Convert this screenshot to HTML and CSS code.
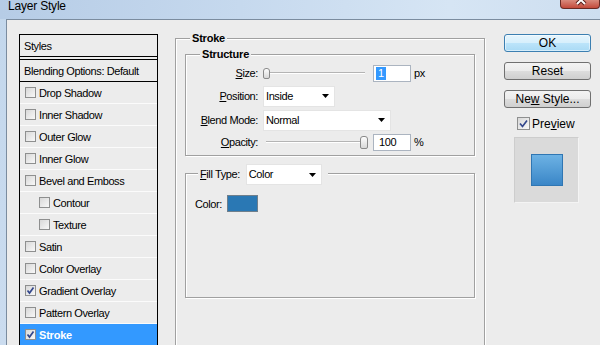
FILE: index.html
```html
<!DOCTYPE html>
<html>
<head>
	<meta charset="utf-8">
	<title>Layer Style</title>
	<link rel="stylesheet" href="styles.css">
</head>
<body>
	<div class="window">
		<div class="titlebar">
			<span class="title">Layer Style</span>
			<div class="close">
				<svg width="38" height="8" viewBox="0 0 38 8">
					<path d="M16 -4 L24 4 M24 -4 L16 4" stroke="#5a1f1a" stroke-width="4" fill="none"/>
					<path d="M16 -4 L24 4 M24 -4 L16 4" stroke="#fff" stroke-width="2" fill="none"/>
				</svg>
			</div>
		</div>

		<div class="dialog">
			<!-- bal oldali stílus lista -->
			<ul class="styles-list">
				<li class="list-head">Styles</li>
				<li class="list-blend">Blending Options: Default</li>
				<li><span class="cb"></span>Drop Shadow</li>
				<li><span class="cb"></span>Inner Shadow</li>
				<li><span class="cb"></span>Outer Glow</li>
				<li><span class="cb"></span>Inner Glow</li>
				<li><span class="cb"></span>Bevel and Emboss</li>
				<li class="sub"><span class="cb"></span>Contour</li>
				<li class="sub"><span class="cb"></span>Texture</li>
				<li><span class="cb"></span>Satin</li>
				<li><span class="cb"></span>Color Overlay</li>
				<li><span class="cb"><svg viewBox="0 0 9 9"><path d="M1.5 4.5 L3.5 7 L7.5 1.5"/></svg></span>Gradient Overlay</li>
				<li><span class="cb"></span>Pattern Overlay</li>
				<li class="selected"><span class="cb"><svg viewBox="0 0 9 9"><path d="M1.5 4.5 L3.5 7 L7.5 1.5"/></svg></span>Stroke</li>
			</ul>

			<!-- Stroke beállítások -->
			<fieldset class="group group-stroke">
				<legend>Stroke</legend>

				<fieldset class="group group-structure">
					<legend>Structure</legend>
					<div class="form-grid">
						<label><u>S</u>ize:</label>
						<div class="controls">
							<div class="slider"><span class="thumb"></span></div>
							<span class="field"><span class="sel">1</span></span>
							<span class="unit">px</span>
						</div>

						<label><u>P</u>osition:</label>
						<div class="controls">
							<div class="combo combo-position"><span>Inside</span><svg class="arrow" width="7" height="4" viewBox="0 0 7 4"><polygon points="0,0 7,0 3.5,4"/></svg></div>
						</div>

						<label><u>B</u>lend Mode:</label>
						<div class="controls">
							<div class="combo combo-blend"><span>Normal</span><svg class="arrow" width="7" height="4" viewBox="0 0 7 4"><polygon points="0,0 7,0 3.5,4"/></svg></div>
						</div>

						<label><u>O</u>pacity:</label>
						<div class="controls">
							<div class="slider slider-end"><span class="thumb thumb-tall"></span></div>
							<span class="field field-num">100</span>
							<span class="unit">%</span>
						</div>
					</div>
				</fieldset>

				<fieldset class="group group-fill">
					<legend>
						<div class="legend-row">
							<label><u>F</u>ill Type:</label>
							<div class="combo combo-fill"><span>Color</span><svg class="arrow" width="7" height="4" viewBox="0 0 7 4"><polygon points="0,0 7,0 3.5,4"/></svg></div>
						</div>
					</legend>
					<div class="color-row">
						<span>Color:</span>
						<span class="swatch"></span>
					</div>
				</fieldset>
			</fieldset>

			<!-- gombok és előnézet -->
			<div class="buttons">
				<div class="btn btn-default">OK</div>
				<div class="btn">Reset</div>
				<div class="btn">Ne<u>w</u> Style...</div>
				<div class="preview-check">
					<span class="cb cb-lg"><svg viewBox="0 0 11 11"><path d="M2 5.5 L4.5 8.5 L9 2.5"/></svg></span>
					<span>Pre<u>v</u>iew</span>
				</div>
				<div class="preview"><div class="preview-swatch"></div></div>
			</div>
		</div>
	</div>
</body>
</html>
```

FILE: styles.css
```css
body {
	margin: 0;
	font-family: "Liberation Sans", Arial, sans-serif;
	font-size: 11px;
	letter-spacing: -0.4px;
	color: #000;
}

.window {
	width: 600px;
	height: 345px;
	overflow: hidden;
	display: flex;
	flex-direction: column;
	background: linear-gradient(to bottom, #c3d7ec, #cbdcef);
}

.titlebar {
	height: 19px;
	flex-shrink: 0;
	display: flex;
	justify-content: space-between;
	align-items: flex-start;
	background: linear-gradient(to right, #b6cce6, #c6d9ee 40%, #d6e5f4 75%, #cddef0);
}

.title {
	margin: -1px 0 0 8px;
	font-size: 12px;
	line-height: 14px;
	letter-spacing: -0.2px;
}

.close {
	width: 38px;
	height: 8px;
	border: 1px solid #6a2b24;
	border-top: none;
	border-radius: 0 0 4px 4px;
	background: linear-gradient(#d98a7c, #c34a3b);
	overflow: hidden;
}

.close svg {
	display: block;
}

.dialog {
	flex: 1;
	min-height: 0;
	margin-left: 6px;
	border-top: 1px solid #7b8c9f;
	border-left: 1px solid #7b8c9f;
	background: #ececec;
	display: flex;
	align-items: flex-start;
	padding: 12px 0 0 12px;
	overflow: hidden;
}

/* lista */
.styles-list {
	list-style: none;
	margin: 2px 0 0;
	padding: 0;
	width: 139px;
	box-sizing: border-box;
	flex-shrink: 0;
	border: 1px solid #000;
	border-bottom: none;
}

.styles-list li {
	height: 21px;
	display: flex;
	align-items: center;
	gap: 3px;
	padding-left: 5px;
	border-bottom: 1px solid #fbfbfb;
	white-space: nowrap;
}

.styles-list .list-head {
	padding-left: 4px;
	border-bottom-color: #000;
	margin-bottom: 2px;
}

.styles-list .list-blend {
	padding-left: 4px;
	border-top: 1px solid #000;
	border-bottom-color: #000;
}

.styles-list .sub {
	padding-left: 19px;
}

.styles-list .selected {
	background: #3399ff;
	color: #fff;
	font-weight: bold;
	letter-spacing: -0.2px;
	border-bottom-color: #3399ff;
}

.cb {
	width: 11px;
	height: 11px;
	box-sizing: border-box;
	flex-shrink: 0;
	border: 1px solid #8e8f8f;
	background: linear-gradient(135deg, #d8d8d8, #f8f8f8);
	display: flex;
}

.cb svg {
	width: 100%;
	height: 100%;
}

.cb path {
	fill: none;
	stroke: #33478c;
	stroke-width: 1.7;
}

.cb-lg {
	width: 13px;
	height: 13px;
}

/* csoportok */
.group {
	margin: 0;
	border: 1px solid #a0a0a0;
	box-shadow: inset 1px 1px 0 #fff, 1px 1px 0 #fff;
	min-width: 0;
}

.group legend {
	padding: 0 2px;
	font-weight: bold;
	line-height: 13px;
	letter-spacing: -0.2px;
	background: #ececec;
}

.group-stroke {
	width: 310px;
	box-sizing: border-box;
	flex-shrink: 0;
	margin-left: 17px;
	padding: 3px 9px 0;
	height: 400px;
}

.group-stroke > legend {
	margin-left: 5px;
}

.group-structure {
	padding: 1px 0 3px;
}

.group-structure > legend {
	margin-left: 14px;
}

.form-grid {
	display: grid;
	grid-template-columns: 72px auto;
	grid-template-rows: 22px 24px 24px 20px;
	column-gap: 5px;
	align-items: center;
}

.form-grid label {
	text-align: right;
}

.controls {
	display: flex;
	align-items: center;
}

.slider {
	width: 105px;
	height: 14px;
	margin-right: 5px;
	display: flex;
	align-items: center;
	background:
		linear-gradient(#b4b4b4, #b4b4b4) no-repeat 3px 6px / 99px 1px,
		linear-gradient(#fff, #fff) no-repeat 3px 7px / 99px 1px;
}

.slider-end {
	justify-content: flex-end;
}

.thumb {
	width: 7px;
	height: 11px;
	box-sizing: border-box;
	border: 1px solid #8a8a8a;
	border-radius: 3px 3px 2px 2px;
	background: linear-gradient(#fdfdfd, #d8d8d8);
}

.thumb-tall {
	width: 8px;
	height: 13px;
}

.field {
	width: 38px;
	height: 17px;
	box-sizing: border-box;
	border: 1px solid #abb4c0;
	background: #fff;
	display: flex;
	align-items: center;
	padding-left: 2px;
	margin-right: 3px;
}

.field-num {
	padding-left: 5px;
}

.sel {
	background: #3399ff;
	color: #fff;
	padding: 0 2px;
	line-height: 13px;
}

.combo {
	height: 21px;
	box-sizing: border-box;
	border: 1px solid #e4e4e4;
	background: #fff;
	display: flex;
	align-items: center;
	justify-content: space-between;
	padding: 0 5px 0 2px;
}

.combo-position {
	width: 72px;
}

.combo-blend {
	width: 128px;
}

.combo-fill {
	width: 76px;
}

.arrow {
	display: block;
}

.group-fill {
	margin-top: 5px;
	padding: 0 0 85px;
}

.group-fill > legend {
	margin-left: 12px;
	padding: 3px 6px 0 2px;
	font-weight: normal;
	letter-spacing: -0.4px;
}

.legend-row {
	display: flex;
	align-items: center;
	gap: 6px;
}

.color-row {
	display: flex;
	align-items: center;
	gap: 5px;
	height: 17px;
	margin: 10px 0 0 9px;
}

.swatch {
	width: 31px;
	height: 17px;
	box-sizing: border-box;
	border: 1px solid #6f7f8c;
	background: #2a78b4;
}

/* gombok */
.buttons {
	width: 87px;
	flex-shrink: 0;
	margin: 2px 0 0 19px;
	display: flex;
	flex-direction: column;
	font-size: 12px;
	letter-spacing: 0;
}

.btn {
	height: 18px;
	box-sizing: border-box;
	border: 1px solid #707070;
	border-radius: 3px;
	background: linear-gradient(#f3f3f3 0%, #ebebeb 50%, #dddddd 51%, #cfcfcf 100%);
	text-align: center;
	line-height: 16px;
	margin-bottom: 10px;
}

.btn-default {
	border-color: #3c7fb1;
	background: linear-gradient(#e6f5fd 0%, #d6effc 50%, #bce4fa 51%, #a9daf5 100%);
	box-shadow: inset 0 0 0 1px rgba(255, 255, 255, 0.5);
}

.preview-check {
	display: flex;
	align-items: center;
	gap: 2px;
	height: 13px;
	margin-top: -1px;
	padding-left: 13px;
}

.preview {
	width: 65px;
	height: 66px;
	box-sizing: border-box;
	margin: 7px 0 0 10px;
	background: #dadada;
	border: 1px solid;
	border-color: #cdcdcd #f4f4f4 #f4f4f4 #cdcdcd;
	display: flex;
	align-items: center;
	justify-content: center;
}

.preview-swatch {
	width: 32px;
	height: 32px;
	box-sizing: border-box;
	border: 1px solid #2f76b3;
	background: linear-gradient(#6db2e4, #3a86c7);
}
```
